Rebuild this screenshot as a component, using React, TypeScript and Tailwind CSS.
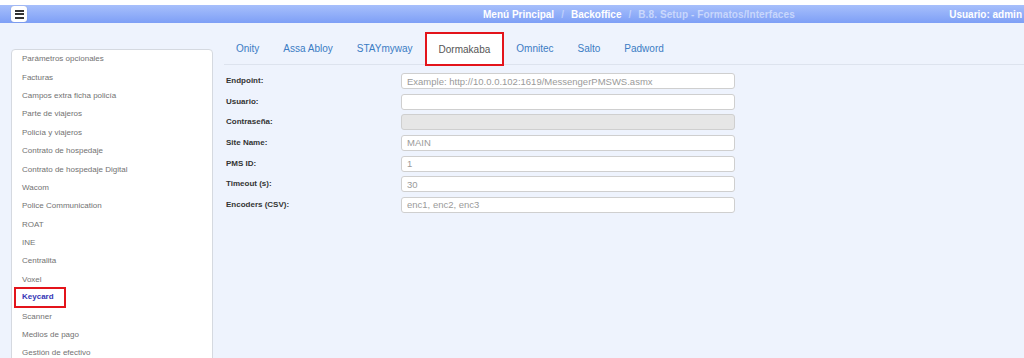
const menuItems = [
  "Parámetros opcionales",
  "Facturas",
  "Campos extra ficha policía",
  "Parte de viajeros",
  "Policía y viajeros",
  "Contrato de hospedaje",
  "Contrato de hospedaje Digital",
  "Wacom",
  "Police Communication",
  "ROAT",
  "INE",
  "Centralita",
  "Voxel",
  "Keycard",
  "Scanner",
  "Medios de pago",
  "Gestión de efectivo",
];

const tabs = ["Onity", "Assa Abloy", "STAYmyway", "Dormakaba", "Omnitec", "Salto", "Padword"];

const fields = [
  { label: "Endpoint:", placeholder: "Example: http://10.0.0.102:1619/MessengerPMSWS.asmx" },
  { label: "Usuario:", placeholder: "" },
  { label: "Contraseña:", placeholder: "", disabled: true },
  { label: "Site Name:", placeholder: "MAIN" },
  { label: "PMS ID:", placeholder: "1" },
  { label: "Timeout (s):", placeholder: "30" },
  { label: "Encoders (CSV):", placeholder: "enc1, enc2, enc3" },
];

export default function App() {
  return (
    <div className="w-[1024px] h-[358px] overflow-hidden bg-[#eef3fd] font-['Liberation_Sans',Arial,sans-serif]">
      <div className="h-[5px] bg-white" />
      <header className="h-[18px] flex items-center bg-gradient-to-b from-[#a7bffb] to-[#7e9ff6]">
        <button className="ml-[11px] w-[16px] h-[16px] bg-white rounded-[3px] flex flex-col items-center justify-center gap-[1.5px] shadow-[0_0_1px_rgba(0,0,0,0.3)]">
          <span className="block w-[9px] h-[2px] bg-[#333]" />
          <span className="block w-[9px] h-[2px] bg-[#333]" />
          <span className="block w-[9px] h-[2px] bg-[#333]" />
        </button>
        <nav className="ml-[456px] flex items-center text-[10px] font-bold text-white whitespace-nowrap">
          <span>Menú Principal</span>
          <span className="mx-[7px] text-white/40">/</span>
          <span>Backoffice</span>
          <span className="mx-[7px] text-white/40">/</span>
          <span className="text-white/50 tracking-[0.1px]">B.8. Setup - Formatos/Interfaces</span>
        </nav>
        <div className="ml-auto pr-[2px] text-[10px] font-bold text-white whitespace-nowrap">Usuario: admin</div>
      </header>

      <div className="flex">
        <aside className="ml-[11px] mt-[26px] w-[202px] h-[320px] shrink-0 bg-white border border-[#d5d9e0] rounded-t-[4px]">
          {menuItems.map((item) =>
            item === "Keycard" ? (
              <div key={item} className="h-[18.4px] flex items-center pl-[10px]">
                <span className="-ml-[8px] -mt-[2px] pl-[6px] pr-[10px] h-[21px] flex items-center border-2 border-[#e3141b] text-[8px] font-bold text-[#3535b5]">
                  {item}
                </span>
              </div>
            ) : (
              <div key={item} className="h-[18.4px] flex items-center pl-[10px] text-[8px] text-[#727272] whitespace-nowrap">
                {item}
              </div>
            )
          )}
        </aside>

        <main className="ml-[11px] mt-[9px] flex-1">
          <div className="flex h-[33px] border-b border-[#dde3ee]">
            {tabs.map((tab) =>
              tab === "Dormakaba" ? (
                <div
                  key={tab}
                  className="h-[34px] px-[12px] flex items-center bg-white border-2 border-[#e3141b] text-[10px] text-[#555]"
                >
                  {tab}
                </div>
              ) : (
                <div key={tab} className="h-[33px] px-[12px] flex items-center text-[10px] text-[#3b7cc4]">
                  {tab}
                </div>
              )
            )}
          </div>

          <div className="mt-[8px] flex flex-col gap-[4.67px]">
            {fields.map((f) => (
              <div key={f.label} className="flex items-center h-[16px]">
                <label className="ml-[2px] w-[175px] text-[8px] font-bold text-[#333]">{f.label}</label>
                <input
                  disabled={f.disabled}
                  placeholder={f.placeholder}
                  className={
                    "w-[334px] h-[16px] rounded-[3px] border border-[#cfcfcf] pl-[5px] text-[9.5px] placeholder:text-[#9a9a9a] outline-none " +
                    (f.disabled ? "bg-[#e6e6e6]" : "bg-white")
                  }
                />
              </div>
            ))}
          </div>
        </main>
      </div>
    </div>
  );
}
